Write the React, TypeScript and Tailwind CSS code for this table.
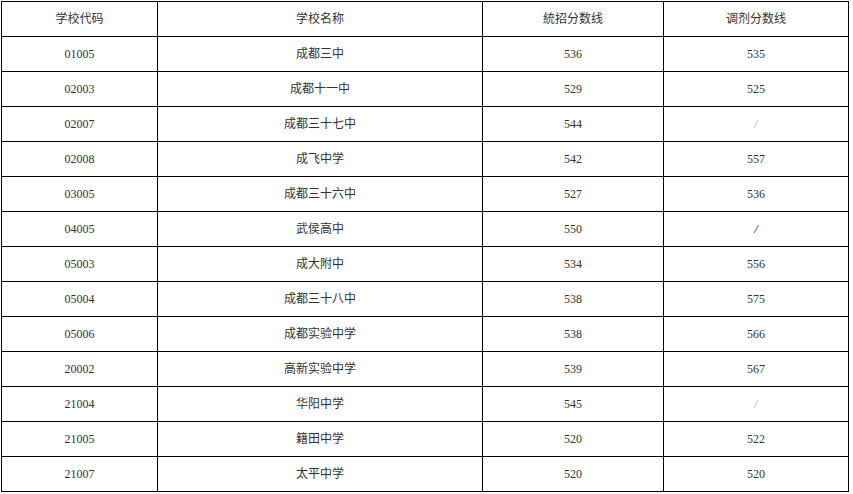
import React from "react";

const rows: [string, string, string, string, number?][] = [
  ["01005", "成都三中", "536", "535"],
  ["02003", "成都十一中", "529", "525"],
  ["02007", "成都三十七中", "544", "/", 1],
  ["02008", "成飞中学", "542", "557"],
  ["03005", "成都三十六中", "527", "536"],
  ["04005", "武侯高中", "550", "/", 2],
  ["05003", "成大附中", "534", "556"],
  ["05004", "成都三十八中", "538", "575"],
  ["05006", "成都实验中学", "538", "566"],
  ["20002", "高新实验中学", "539", "567"],
  ["21004", "华阳中学", "545", "/", 1],
  ["21005", "籍田中学", "520", "522"],
  ["21007", "太平中学", "520", "520"],
];

const cell = "border border-black text-center align-middle p-0 h-[35px]";

export default function App() {
  return (
    <div className="w-[853px] h-[494px] bg-white pt-px pl-px">
      <table
        className="table-fixed border-collapse w-[847px] text-[12px] text-[#333]"
        style={{ fontFamily: '"Liberation Serif", "Noto Sans CJK SC", serif' }}
      >
        <colgroup>
          <col className="w-[156px]" />
          <col className="w-[325px]" />
          <col className="w-[181px]" />
          <col className="w-[185px]" />
        </colgroup>
        <thead>
          <tr>
            <th className={cell + " font-normal"}>学校代码</th>
            <th className={cell + " font-normal"}>学校名称</th>
            <th className={cell + " font-normal"}>統招分数线</th>
            <th className={cell + " font-normal"}>调剂分数线</th>
          </tr>
        </thead>
        <tbody>
          {rows.map((r) => (
            <tr key={r[0]}>
              <td className={cell}>{r[0]}</td>
              <td className={cell}>{r[1]}</td>
              <td className={cell}>{r[2]}</td>
              <td className={cell}>
                {r[4] === 1 ? (
                  <span className="text-[#bbb] italic">/</span>
                ) : r[4] === 2 ? (
                  <span className="text-[#222] italic text-[13px]">/</span>
                ) : (
                  r[3]
                )}
              </td>
            </tr>
          ))}
        </tbody>
      </table>
    </div>
  );
}
